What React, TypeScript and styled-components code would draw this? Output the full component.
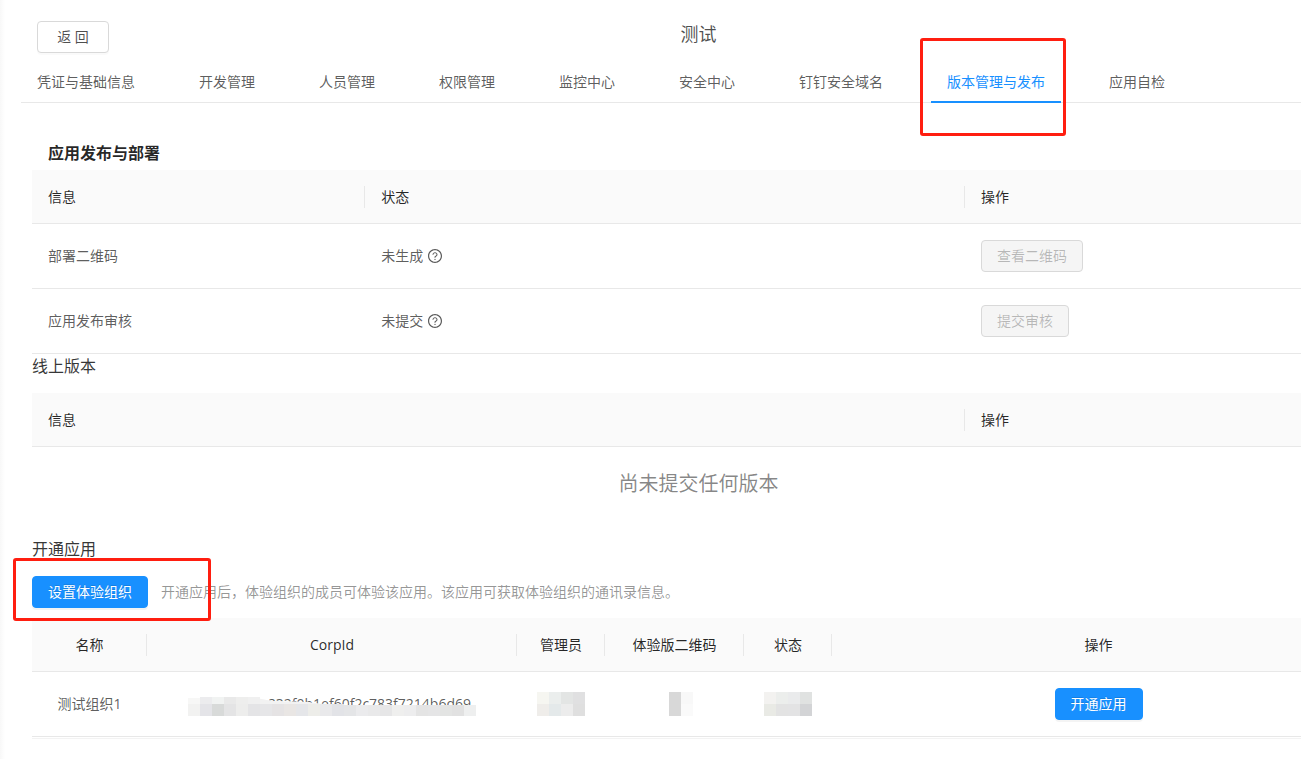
import React from 'react';
import styled, { createGlobalStyle, css } from 'styled-components';
import { AiOutlineQuestionCircle } from 'react-icons/ai';

const GlobalStyle = createGlobalStyle`
  *, *::before, *::after { box-sizing: border-box; }
  body {
    margin: 0;
    background: #fff;
    color: rgba(0, 0, 0, 0.65);
    font-family: 'Open Sans', 'Noto Sans CJK SC', sans-serif;
    font-size: 14px;
    font-weight: 400;
    line-height: 22px;
  }
  button { font: inherit; }
`;

const Viewport = styled.div`
  min-height: 100vh;
  overflow: hidden;
  background: linear-gradient(to right, #f8f8f8, #fff 5px);
`;

/* The console is wider than the window; its right edge is cut off. */
const Page = styled.div`
  width: calc(100% + 96px);
  padding: 21px 0;
`;

const Header = styled.header`
  display: grid;
  grid-template-columns: 1fr auto 1fr;
  align-items: start;
  padding: 0 37px;
`;

const Title = styled.h1`
  margin: 0;
  font-size: 18px;
  font-weight: 400;
  line-height: 26px;
  color: rgba(0, 0, 0, 0.7);
`;

type Kind = 'default' | 'primary';

const Button = styled.button<{ $kind?: Kind }>`
  height: 32px;
  padding: 0 15px;
  border: 1px solid #d9d9d9;
  border-radius: 4px;
  background: #fff;
  color: rgba(0, 0, 0, 0.7);
  line-height: 28px;
  white-space: nowrap;
  justify-self: start;
  box-shadow: 0 2px 0 rgba(0, 0, 0, 0.02);
  cursor: pointer;

  ${({ $kind }) =>
    $kind === 'primary' &&
    css`
      border-color: #1890ff;
      background: #1890ff;
      color: #fff;
      text-shadow: 0 -1px 0 rgba(0, 0, 0, 0.12);
      box-shadow: 0 2px 0 rgba(0, 0, 0, 0.045);
    `}

  &:disabled {
    background: #f5f5f5;
    color: rgba(0, 0, 0, 0.25);
    box-shadow: none;
    cursor: not-allowed;
  }
`;

const BackButton = styled(Button)`
  width: 72px;
`;

const Tabs = styled.nav`
  display: flex;
  gap: 32px;
  margin-left: 21px;
  border-bottom: 1px solid #e8e8e8;
`;

const Tab = styled.a<{ $active?: boolean }>`
  position: relative;
  margin-bottom: -1px;
  padding: 18px 16px 8px;
  border-bottom: 2px solid ${({ $active }) => ($active ? '#1890ff' : 'transparent')};
  color: ${({ $active }) => ($active ? '#1890ff' : 'inherit')};
  text-decoration: none;
  white-space: nowrap;
`;

const Highlight = styled.span<{ $inset: string }>`
  position: absolute;
  inset: ${({ $inset }) => $inset};
  border: 3px solid #ff1e10;
  border-radius: 3px;
  pointer-events: none;
`;

const Content = styled.main`
  margin: 0 32px;
  padding: 38px 0 1px;
  border-bottom: 1px solid #f3f3f3;
`;

const PanelTitle = styled.h2`
  margin: 0;
  padding: 0 16px 5px;
  font-size: 16px;
  font-weight: 700;
  line-height: 24px;
  color: rgba(0, 0, 0, 0.85);
`;

const SectionTitle = styled.h3`
  margin: 0 0 15px;
  font-size: 16px;
  font-weight: 400;
  line-height: 24px;
  color: rgba(0, 0, 0, 0.8);
`;

const Table = styled.table<{ $centered?: boolean }>`
  width: 100%;
  table-layout: fixed;
  border-collapse: separate;
  border-spacing: 0;
  text-align: ${({ $centered }) => ($centered ? 'center' : 'left')};
`;

const HeadCell = styled.th`
  height: 54px;
  padding: 0 16px;
  border-bottom: 1px solid #e8e8e8;
  background: #fafafa;
  color: rgba(0, 0, 0, 0.85);
  font-weight: 400;
  text-align: inherit;
  white-space: nowrap;

  &:not(:last-child) {
    background: linear-gradient(#e8e8e8, #e8e8e8) right center / 1px 22px no-repeat #fafafa;
  }
`;

const Cell = styled.td`
  height: 65px;
  padding: 0 16px;
  border-bottom: 1px solid #e8e8e8;
`;

const Status = styled.span`
  display: inline-flex;
  align-items: center;
  gap: 4px;
`;

const Empty = styled.p`
  margin: 0 0 17px;
  padding: 21px 0 20px;
  font-size: 20px;
  line-height: 32px;
  text-align: center;
  color: rgba(0, 0, 0, 0.48);
`;

const ActionBar = styled.div`
  display: flex;
  align-items: center;
  gap: 13px;
  margin-bottom: 10px;
`;

const Anchor = styled.div`
  position: relative;
  display: flex;
`;

const Hint = styled.span`
  color: rgba(0, 0, 0, 0.42);
`;

const MaskedId = styled.div`
  position: relative;
  width: 288px;
  margin: 0 auto;
  padding-right: 5px;
  text-align: right;

  svg {
    position: absolute;
    left: 0;
    top: 3px;
  }
`;

const Mosaic = styled.svg`
  display: block;
  margin: 0 auto;
`;

const tabs = [
  '凭证与基础信息',
  '开发管理',
  '人员管理',
  '权限管理',
  '监控中心',
  '安全中心',
  '钉钉安全域名',
  '版本管理与发布',
  '应用自检',
];

const releases = [
  { name: '部署二维码', status: '未生成', action: '查看二维码' },
  { name: '应用发布审核', status: '未提交', action: '提交审核' },
];

const managerTiles = [
  ['#f6f6f1', '#ebeeed', '#e3e5e4', '#e0e0e1'],
  ['#efedea', '#e4e9ea', '#ececec', '#dfdfdf'],
];
const codeTiles = [
  ['#ffffff', '#d8d8d8', '#f8f8f8'],
  ['#ffffff', '#d8d8d8', '#fafafa'],
];
const stateTiles = [
  ['#f3f2f0', '#eceeec', '#eaebec', '#e0e2e1'],
  ['#e9eae5', '#e3e3e3', '#e3e3e4', '#d3d4d6'],
];
const idTiles = [
  '#f2f2f1', '#e4e4e8', '#d8dad9', '#e4e4e5', '#ededec', '#e4e4e6', '#e6e6e8', '#e5e3e4',
  '#e9e6e4', '#e5e6e9', '#edede9', '#e9e9eb', '#e2e3e7', '#e4e5e7', '#ebebed', '#e9e9ea',
  '#e6e6e7', '#efefee', '#ededee', '#e4e4e4', '#e5e5e6', '#e3e4e3', '#e1e1e1', '#eeefef',
];
const idTopTiles = ['#f7f7f6', '#ececee', '#f1f3f2', '#e9e9e9', '#eeeeed', '#f0f0f0'];

function Tiles({ rows }: { rows: string[][] }) {
  const width = rows[0].length * 12;
  return (
    <Mosaic width={width} height={24} shapeRendering="crispEdges" aria-hidden="true">
      {rows.map((row, y) =>
        row.map((fill, x) => (
          <rect key={`${x}-${y}`} x={x * 12} y={y * 12} width={12} height={12} fill={fill} />
        )),
      )}
    </Mosaic>
  );
}

function IdMask() {
  return (
    <svg width={288} height={20} aria-hidden="true">
      <path d="M0 20V1H68L84 5L118 6L136 9H288V20Z" fill="#fff" />
      <path d="M60 8V1Q72 2 84 5L118 6L136 8Z" fill="#f2f2f2" />
      {idTopTiles.map((fill, x) => (
        <rect key={x} x={x * 12} y={x === 0 ? 2 : 1} width={12} height={7} fill={fill} />
      ))}
      {idTiles.map((fill, x) => (
        <rect
          key={x}
          x={x * 12}
          y={x > 12 ? 9 : 8}
          width={12}
          height={x > 12 ? 11 : 12}
          fill={fill}
          shapeRendering="crispEdges"
        />
      ))}
    </svg>
  );
}

export default function App() {
  return (
    <Viewport>
      <GlobalStyle />
      <Page>
        <Header>
          <BackButton type="button">返 回</BackButton>
          <Title>测试</Title>
        </Header>
        <Tabs>
          {tabs.map((label) => {
            const active = label === '版本管理与发布';
            return (
              <Tab key={label} href="#" $active={active} aria-current={active ? 'page' : undefined}>
                {label}
                {active && <Highlight $inset="-15px -5px -35px -11px" />}
              </Tab>
            );
          })}
        </Tabs>
        <Content>
          <PanelTitle>应用发布与部署</PanelTitle>
          <Table>
            <colgroup>
              <col style={{ width: '25%' }} />
              <col style={{ width: '45%' }} />
              <col />
            </colgroup>
            <thead>
              <tr>
                <HeadCell>信息</HeadCell>
                <HeadCell>状态</HeadCell>
                <HeadCell>操作</HeadCell>
              </tr>
            </thead>
            <tbody>
              {releases.map((item) => (
                <tr key={item.name}>
                  <Cell>{item.name}</Cell>
                  <Cell>
                    <Status>
                      {item.status}
                      <AiOutlineQuestionCircle size={16} />
                    </Status>
                  </Cell>
                  <Cell>
                    <Button type="button" disabled>
                      {item.action}
                    </Button>
                  </Cell>
                </tr>
              ))}
            </tbody>
          </Table>

          <SectionTitle>线上版本</SectionTitle>
          <Table>
            <colgroup>
              <col style={{ width: '70%' }} />
              <col />
            </colgroup>
            <thead>
              <tr>
                <HeadCell>信息</HeadCell>
                <HeadCell>操作</HeadCell>
              </tr>
            </thead>
          </Table>
          <Empty>尚未提交任何版本</Empty>

          <SectionTitle>开通应用</SectionTitle>
          <ActionBar>
            <Anchor>
              <Button type="button" $kind="primary">
                设置体验组织
              </Button>
              <Highlight $inset="-18px -63px -13px -19px" />
            </Anchor>
            <Hint>开通应用后，体验组织的成员可体验该应用。该应用可获取体验组织的通讯录信息。</Hint>
          </ActionBar>
          <Table $centered>
            <colgroup>
              <col style={{ width: 115 }} />
              <col style={{ width: 370 }} />
              <col style={{ width: 88 }} />
              <col style={{ width: 139 }} />
              <col style={{ width: 88 }} />
              <col />
            </colgroup>
            <thead>
              <tr>
                <HeadCell>名称</HeadCell>
                <HeadCell>CorpId</HeadCell>
                <HeadCell>管理员</HeadCell>
                <HeadCell>体验版二维码</HeadCell>
                <HeadCell>状态</HeadCell>
                <HeadCell>操作</HeadCell>
              </tr>
            </thead>
            <tbody>
              <tr>
                <Cell>测试组织1</Cell>
                <Cell>
                  <MaskedId>
                    832f0b1ef60f2c783f7214b6d69
                    <IdMask />
                  </MaskedId>
                </Cell>
                <Cell>
                  <Tiles rows={managerTiles} />
                </Cell>
                <Cell>
                  <Tiles rows={codeTiles} />
                </Cell>
                <Cell>
                  <Tiles rows={stateTiles} />
                </Cell>
                <Cell>
                  <Button type="button" $kind="primary">
                    开通应用
                  </Button>
                </Cell>
              </tr>
            </tbody>
          </Table>
        </Content>
      </Page>
    </Viewport>
  );
}
